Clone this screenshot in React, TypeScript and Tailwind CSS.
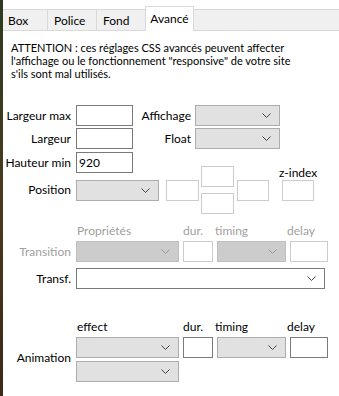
import React from "react";

const Chev = ({ dim }: { dim?: boolean }) => (
  <svg width="9" height="5" viewBox="0 0 9 5" className="shrink-0">
    <polyline points="0.5,0.5 4.5,4.5 8.5,0.5" fill="none" stroke={dim ? "#9a9a9a" : "#444"} strokeWidth="1" />
  </svg>
);

const Sel = ({ w, dim, white }: { w: string; dim?: boolean; white?: boolean }) => (
  <div
    className={`${w} h-[21px] flex items-center justify-end pr-[8px] border ${
      white ? "bg-white border-[#7a7a7a]" : dim ? "bg-[#cccccc] border-[#bfbfbf]" : "bg-[#e1e1e1] border-[#adadad]"
    }`}
  >
    <Chev dim={dim} />
  </div>
);

const Box = ({ w, dim, children }: { w: string; dim?: boolean; children?: React.ReactNode }) => (
  <div
    className={`${w} h-[21px] bg-white border flex items-center pl-[2px] ${dim ? "border-[#cccccc]" : "border-[#7a7a7a]"}`}
  >
    {children}
  </div>
);

export default function App() {
  return (
    <div
      className="w-[339px] h-[396px] flex bg-white text-[12px] text-black overflow-hidden whitespace-nowrap"
      style={{ fontFamily: 'Lato, "Noto Sans", sans-serif' }}
    >
      <div className="w-[3px] h-full bg-gradient-to-b from-[#2c3a22] via-[#4a3a1c] to-[#3a2a18] shrink-0" />
      <div className="flex-1 flex flex-col">
        {/* tabs */}
        <div className="mt-[9px] h-[22px] flex items-end bg-[#f0f0f0] border-t border-b border-[#d9d9d9]">
          <div className="ml-[1px] w-[44px] h-full border-r border-[#d9d9d9] flex items-center pl-[4px] pt-[1px]">Box</div>
          <div className="w-[49px] h-full border-r border-[#d9d9d9] flex items-center pl-[6px] pt-[1px]">Police</div>
          <div className="w-[48px] h-full flex items-center pl-[6px] pt-[1px]">Fond</div>
          <div className="w-[49px] h-[25px] -mb-[1px] bg-white border border-b-0 border-[#d9d9d9] flex items-start justify-center pt-[3px]">
            Avancé
          </div>
        </div>

        {/* warning */}
        <div className="mt-[10px] ml-[8px] leading-[13px] text-[11px]">
          <div>ATTENTION : ces réglages CSS avancés peuvent affecter</div>
          <div>l'affichage ou le fonctionnement "responsive" de votre site</div>
          <div>s'ils sont mal utilisés.</div>
        </div>

        {/* rows */}
        <div className="mt-[25px] flex flex-col">
          <div className="flex items-center h-[21px]">
            <div className="w-[69px] text-right pr-[1px]">Largeur max</div>
            <div className="ml-[4px]"><Box w="w-[57px]" /></div>
            <div className="w-[62px] text-right pr-[4px]">Affichage</div>
            <Sel w="w-[85px]" />
          </div>
          <div className="flex items-center h-[21px] mt-[2px]">
            <div className="w-[69px] text-right pr-[1px]">Largeur</div>
            <div className="ml-[4px]"><Box w="w-[57px]" /></div>
            <div className="w-[62px] text-right pr-[4px]">Float</div>
            <Sel w="w-[85px]" />
          </div>
          <div className="flex items-center h-[21px] mt-[3px]">
            <div className="w-[69px] text-right pr-[1px]">Hauteur min</div>
            <div className="ml-[4px]"><Box w="w-[57px]">920</Box></div>
          </div>
          {/* position cluster */}
          <div className="flex items-center mt-[-7px] h-[48px]">
            <div className="w-[69px] text-right pr-[1px]">Position</div>
            <div className="ml-[4px]"><Sel w="w-[83px]" /></div>
            <div className="ml-[7px]"><Box w="w-[33px]" dim /></div>
            <div className="ml-[2px] flex flex-col gap-[6px]">
              <Box w="w-[33px]" dim />
              <Box w="w-[33px]" dim />
            </div>
            <div className="ml-[3px]"><Box w="w-[32px]" dim /></div>
            <div className="ml-[10px] flex flex-col items-center -mt-[14px]">
              <div className="leading-[14px]">z-index</div>
              <Box w="w-[32px]" dim />
            </div>
          </div>

          {/* transition */}
          <div className="mt-[10px] flex text-[#a0a0a0] leading-[14px]">
            <div className="ml-[74px] w-[106px]">Propriétés</div>
            <div className="w-[32px]">dur.</div>
            <div className="w-[72px]">timing</div>
            <div>delay</div>
          </div>
          <div className="flex items-center mt-[3px]">
            <div className="w-[69px] text-right pr-[1px] text-[#a0a0a0]">Transition</div>
            <div className="ml-[4px] flex items-center gap-[4px]">
              <Sel w="w-[103px]" dim />
              <Box w="w-[30px]" dim />
              <Sel w="w-[69px]" dim />
              <Box w="w-[38px]" dim />
            </div>
          </div>
          <div className="flex items-center mt-[6px]">
            <div className="w-[69px] text-right pr-[1px]">Transf.</div>
            <div className="ml-[4px]"><Sel w="w-[249px]" white /></div>
          </div>

          {/* animation */}
          <div className="mt-[31px] flex leading-[14px]">
            <div className="ml-[74px] w-[106px]">effect</div>
            <div className="w-[32px]">dur.</div>
            <div className="w-[72px]">timing</div>
            <div>delay</div>
          </div>
          <div className="flex items-center mt-[3px]">
            <div className="w-[69px] text-right pr-[1px] pb-[3px]">Animation</div>
            <div className="ml-[4px] flex flex-col gap-[3px]">
              <div className="flex items-center gap-[4px]">
                <Sel w="w-[103px]" />
                <Box w="w-[30px]" />
                <Sel w="w-[69px]" />
                <Box w="w-[38px]" />
              </div>
              <Sel w="w-[103px]" />
            </div>
          </div>
        </div>
      </div>
    </div>
  );
}
